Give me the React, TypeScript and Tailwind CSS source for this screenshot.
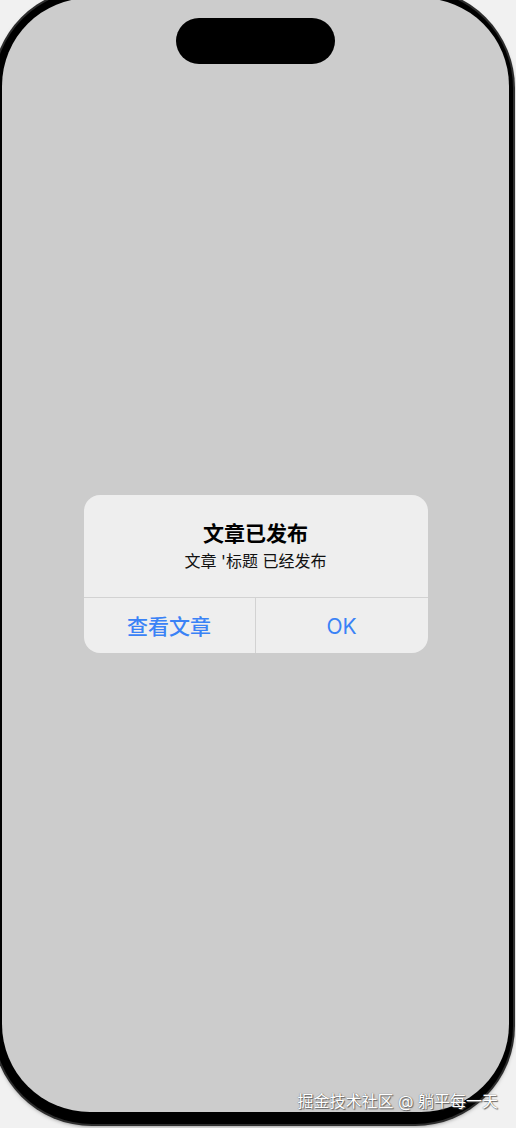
import React from "react";

const cjk = { fontFamily: 'Inter, "Noto Sans CJK SC", sans-serif' };

function AlertDialog() {
  return (
    <div
      className="mt-[431px] flex w-[344px] flex-col overflow-hidden rounded-[16px] bg-[#eeeeee]"
      style={cjk}
    >
      <div className="flex h-[102px] flex-col items-center pt-[25px]">
        <div className="text-[21px] font-semibold leading-[28px] text-black">文章已发布</div>
        <div className="mt-[2px] text-[16px] leading-[22px] text-[#111]">文章 '标题 已经发布</div>
      </div>
      <div className="grid h-[56px] grid-cols-2 border-t border-[#d2d2d2]">
        <button className="flex items-center justify-center border-r border-[#d2d2d2] pt-[2px] text-[21px] font-medium text-[#3a82f6]">
          查看文章
        </button>
        <button className="flex items-center justify-center pt-[2px] text-[21px] text-[#3a82f6]">OK</button>
      </div>
    </div>
  );
}

export default function App() {
  return (
    <div className="relative h-[1128px] w-[516px] overflow-hidden bg-[#f1f1f1]">
      {/* device body */}
      <div className="ml-[-6px] mt-[-10px] h-[1134px] w-[519px] rounded-[98px] bg-black pb-[12px] pl-[8px] pr-[4px] pt-[8px] shadow-[0_0_0_2px_#2e2e2e,0_2px_4px_rgba(0,0,0,0.5)]">
        {/* screen */}
        <div className="flex h-full w-full flex-col items-center rounded-[88px] bg-[#cccccc]">
          <div className="mt-[20px] h-[46px] w-[159px] rounded-full bg-black" />
          <AlertDialog />
        </div>
      </div>
      {/* watermark */}
      <div
        className="absolute right-[18px] top-[1090px] text-[16px] leading-[22px] text-white [text-shadow:0_0_1px_#555,1px_1px_1px_#666]"
        style={cjk}
      >
        掘金技术社区 @ 躺平每一天
      </div>
    </div>
  );
}
